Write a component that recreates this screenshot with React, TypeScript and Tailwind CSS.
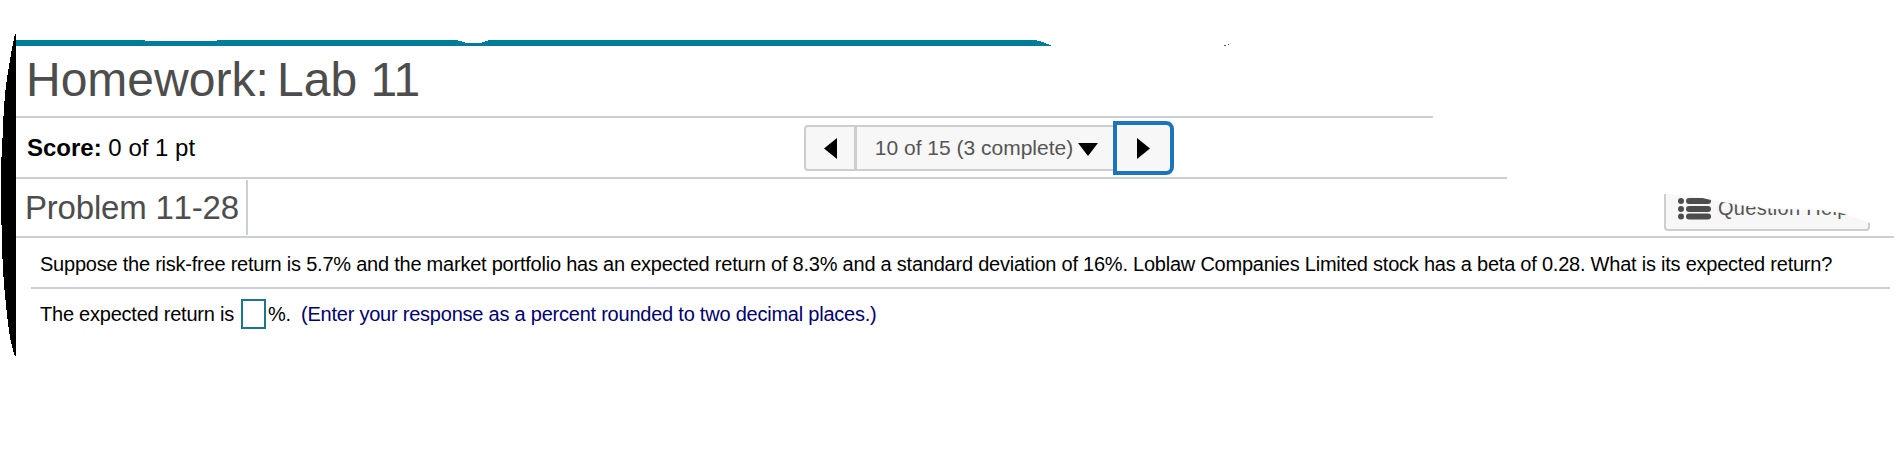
import React from 'react';

interface LineProps {
  text: string;
  className: string;
}

const Line: React.FC<LineProps> = ({ text, className }) => (
  <span className={`block whitespace-pre leading-none ${className}`}>{text}</span>
);

const LeftEdge: React.FC = () => (
  <svg className="block h-[462px] w-4 shrink-0" viewBox="0 0 16 462" shapeRendering="crispEdges">
    <path d="M16 34H15L12 48L9 66L6 85L4 107L3 126L2 150L1 165V218L2 232V250L4 285L7 315L10 338L13 350L15 356H16Z" fill="#000" />
  </svg>
);

const TopBar: React.FC = () => (
  <svg className="block h-1.5 w-[1230px] shrink-0" viewBox="0 0 1230 6" shapeRendering="crispEdges">
    <path d="M0 0H129V1H201V0H438L445 1L450 3H464L470 1L473 0H1019L1027 2L1036 6H0Z" fill="#007c9b" />
    <path d="M1208 5h2v1h-2zM1212 4h1v1h-1z" fill="#456" />
  </svg>
);

const QuestionNav: React.FC = () => (
  <div className="flex items-center">
    <button className="flex h-[46px] w-[52px] items-center rounded-l border-2 border-[#cccdce] bg-[#f7f7f7] pl-[18px] pt-0.5" title="Previous">
      <svg width="13" height="21" viewBox="0 0 13 21"><path d="M13 0V21L0 10.5Z" /></svg>
    </button>
    <button className="flex h-[46px] w-[258px] items-center border-y-2 border-l border-[#cccdce] bg-[#f7f7f7] pl-[13px]">
      <Line text="10 of 15 (3 complete)" className="w-[208px] text-[21px] text-[#555]" />
      <svg className="mt-[3px]" width="20" height="13" viewBox="0 0 20 13"><path d="M0 0H20L10 13Z" /></svg>
    </button>
    <button className="-ml-px flex h-[54px] w-[61px] items-center rounded-r-lg border-4 border-[#1c75bc] bg-[#f7f7f7] pl-5 pt-0.5" title="Next">
      <svg width="13" height="21" viewBox="0 0 13 21"><path d="M0 0V21L13 10.5Z" /></svg>
    </button>
  </div>
);

const QuestionHelp: React.FC = () => (
  <button className="flex h-[52px] w-[206px] items-center rounded border-2 border-[#cccdce] bg-[#f7f7f7] pl-3 pt-[8px] [clip-path:polygon(0_15px,30px_17px,47px_21px,75px_26px,110px_30px,155px_31px,178px_34px,206px_44px,206px_52px,0_52px)]">
    <svg width="34" height="22" viewBox="0 0 34 22" fill="#4d4d4d">
      <circle cx="3" cy="3" r="3" />
      <circle cx="3" cy="11" r="3" />
      <circle cx="3" cy="18.5" r="3" />
      <rect x="8" y="0" width="25" height="6" rx="3" />
      <rect x="8" y="8" width="25" height="6" rx="3" />
      <rect x="8" y="15.5" width="25" height="6" rx="3" />
    </svg>
    <Line text="Question Help" className="mb-0.5 ml-1.5 text-[20px] tracking-[0.3px] text-[#555]" />
  </button>
);

const App: React.FC = () => {
  return (
    <div className="flex h-[462px] w-[1903px] overflow-hidden bg-white font-['Liberation_Sans',Arial,sans-serif] text-black">
      <LeftEdge />
      <main className="flex flex-1 flex-col pt-10">
        <TopBar />
        <header className="flex h-[72px] w-[1417px] border-b-2 border-[#cccfd5] pl-2.5 pt-2.5 text-[48px] text-[#4d4d4d]">
          <Line text="Homework: " className="w-[251px]" />
          <Line text="Lab 11" className="" />
        </header>
        <section className="flex h-[61px] w-[1491px] items-center border-b-2 border-[#cccfd5] pl-[11px]">
          <div className="flex w-[777px] text-[24px]">
            <Line text="Score:" className="font-bold" />
            <Line text=" 0 of 1 pt" className="" />
          </div>
          <QuestionNav />
        </section>
        <section className="flex h-[59px] w-[1878px] justify-between border-b-2 border-[#cccfd5] pr-6">
          <div className="mt-px h-[55px] w-[232px] border-r-2 border-[#cccfd5] pl-[9px] pt-[11px]">
            <Line text="Problem 11-28" className="text-[33px] tracking-[-0.2px] text-[#4d4d4d] [font-kerning:none]" />
          </div>
          <QuestionHelp />
        </section>
        <section className="ml-[15px] h-[51px] w-[1859px] border-b-2 border-[#cccfd5] pl-[9px] pt-4">
          <Line text="Suppose the risk-free return is 5.7% and the market portfolio has an expected return of 8.3% and a standard deviation of 16%. Loblaw Companies Limited stock has a beta of 0.28. What is its expected return?" className="text-[20px] tracking-[-0.228px]" />
        </section>
        <section className="ml-6 flex h-[50px] items-center text-[20px] tracking-[-0.228px]">
          <Line text="The expected return is" className="w-[201px]" />
          <input className="h-[30px] w-[25px] border-2 border-[#1b7888] bg-white" />
          <Line text="%." className="ml-0.5 w-[33px]" />
          <Line text="(Enter your response as a percent rounded to two decimal places.)" className="text-[#00006e]" />
        </section>
      </main>
    </div>
  );
};

export default App;
